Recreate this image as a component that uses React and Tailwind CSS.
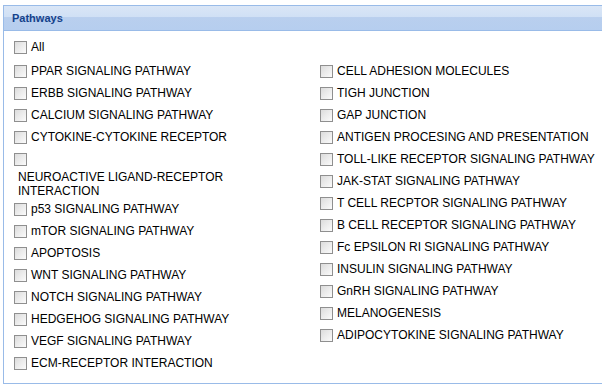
const LEFT = [
  'PPAR SIGNALING PATHWAY',
  'ERBB SIGNALING PATHWAY',
  'CALCIUM SIGNALING PATHWAY',
  'CYTOKINE-CYTOKINE RECEPTOR',
  'NEUROACTIVE LIGAND-RECEPTOR INTERACTION',
  'p53 SIGNALING PATHWAY',
  'mTOR SIGNALING PATHWAY',
  'APOPTOSIS',
  'WNT SIGNALING PATHWAY',
  'NOTCH SIGNALING PATHWAY',
  'HEDGEHOG SIGNALING PATHWAY',
  'VEGF SIGNALING PATHWAY',
  'ECM-RECEPTOR INTERACTION',
];

const RIGHT = [
  'CELL ADHESION MOLECULES',
  'TIGH JUNCTION',
  'GAP JUNCTION',
  'ANTIGEN PROCESING AND PRESENTATION',
  'TOLL-LIKE RECEPTOR SIGNALING PATHWAY',
  'JAK-STAT SIGNALING PATHWAY',
  'T CELL RECPTOR SIGNALING PATHWAY',
  'B CELL RECEPTOR SIGNALING PATHWAY',
  'Fc EPSILON RI SIGNALING PATHWAY',
  'INSULIN SIGNALING PATHWAY',
  'GnRH SIGNALING PATHWAY',
  'MELANOGENESIS',
  'ADIPOCYTOKINE SIGNALING PATHWAY',
];

const Box = () => (
  <span className="w-[13px] h-[13px] shrink-0 border border-[#8f8f8f] bg-gradient-to-br from-[#dcdcdc] to-[#fbfbfb]" />
);

const Item = ({ label }) => {
  // the long one drops its label under the box
  if (label.startsWith('NEUROACTIVE')) {
    return (
      <div>
        <div className="h-[22px] flex items-center"><Box /></div>
        <div className="pl-[4px] leading-[14px]">NEUROACTIVE LIGAND-RECEPTOR<br />INTERACTION</div>
      </div>
    );
  }
  return (
    <div className="h-[22px] flex items-center gap-[4px]">
      <Box />
      <span className="whitespace-nowrap">{label}</span>
    </div>
  );
};

export default function App() {
  return (
    <div className="w-[602px] h-[385px] bg-white overflow-hidden pt-[5px] pl-[3px]" style={{ fontFamily: '"Liberation Sans", Arial, sans-serif' }}>
      <div className="w-[620px] border border-[#99bbe8] h-[379px]">
        {/* Header */}
        <div className="h-[25px] border-b border-[#99bbe8] bg-[linear-gradient(to_bottom,#dae6f6_0%,#d0e0f5_45%,#b9cfee_48%,#b6ceef_100%)] flex items-center pl-[8px]">
          <span className="text-[11px] font-bold text-[#15428b]">Pathways</span>
        </div>

        <div className="pl-[10px] pt-[5px] text-[12px] text-black">
          <Item label="All" />
          <div className="grid grid-cols-[306px_306px] mt-[2px]">
            <div>
              {LEFT.map(l => <Item key={l} label={l} />)}
            </div>
            <div>
              {RIGHT.map(l => <Item key={l} label={l} />)}
            </div>
          </div>
        </div>
      </div>
    </div>
  );
}
